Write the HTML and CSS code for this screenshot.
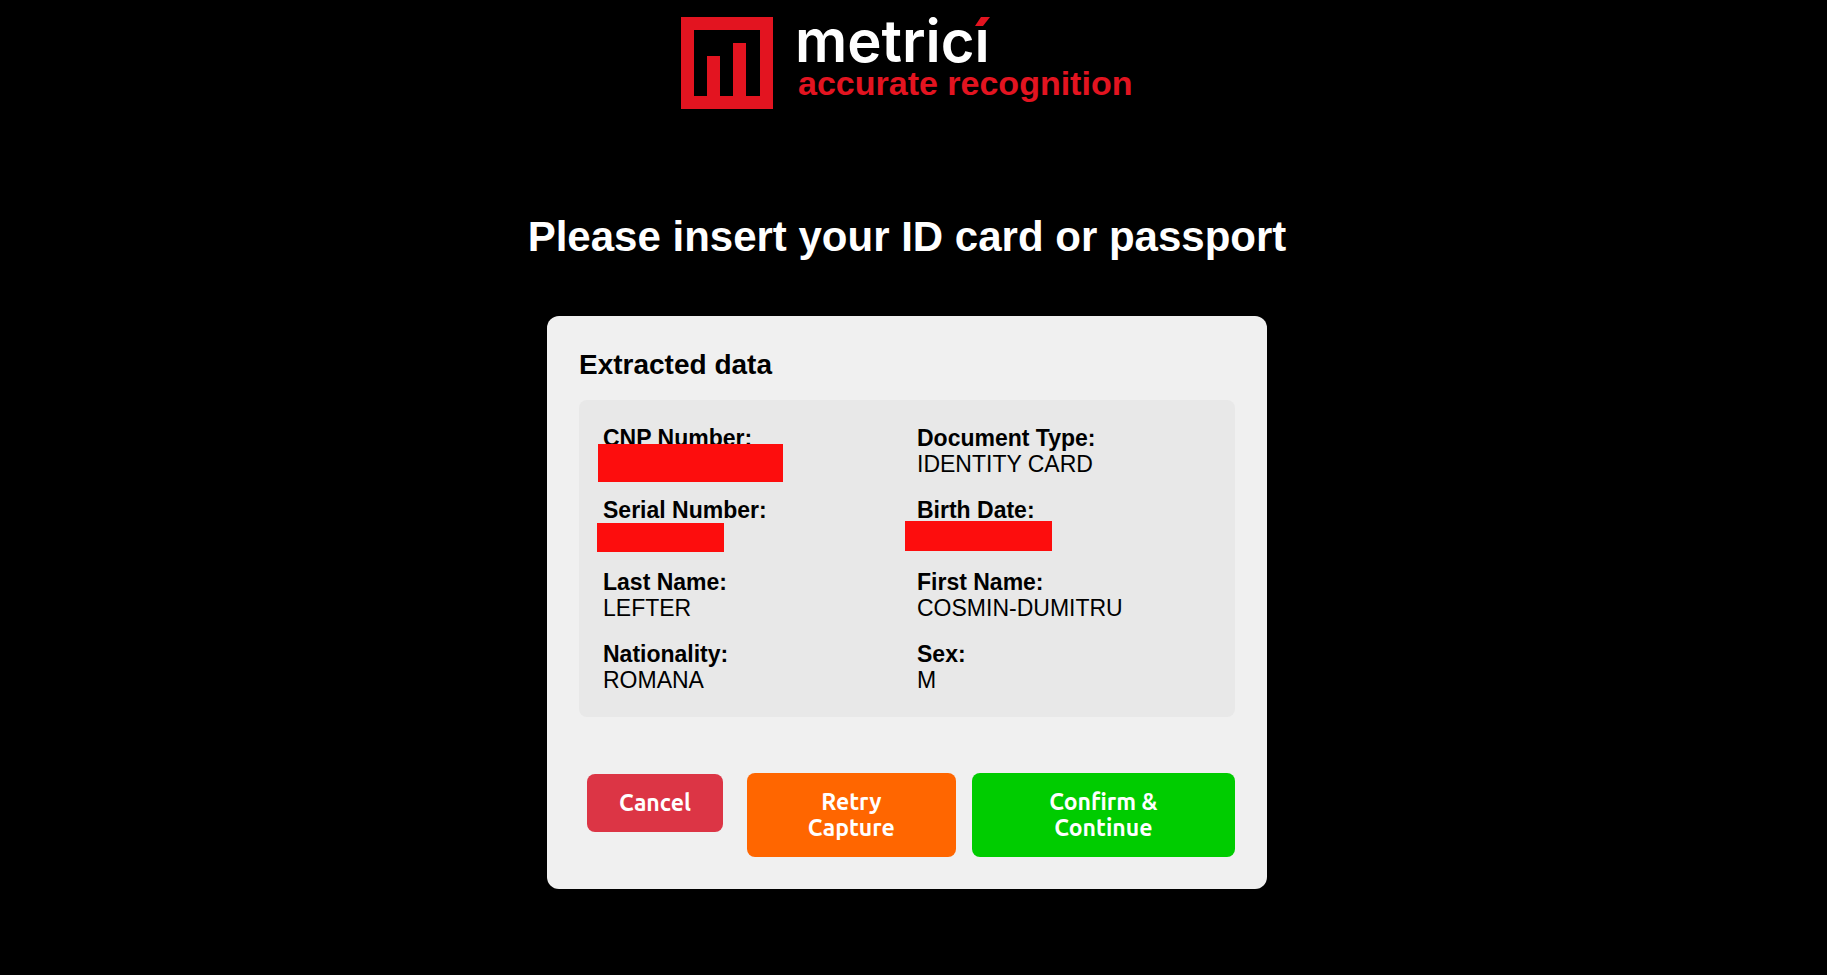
FILE: index.html
```
<!DOCTYPE html>
<html lang="en">
<head>
<meta charset="UTF-8">
<meta name="viewport" content="width=device-width, initial-scale=1.0">
<title>Metrici - Accurate recognition</title>
<link rel="stylesheet" href="styles.css">
</head>
<body>
<header>
  <svg class="logo" width="453" height="92" viewBox="0 0 453 92" role="img" aria-label="metrici accurate recognition">
    <path class="logo-red" fill-rule="evenodd" d="M0 0H92V92H0ZM13 13V79H26V39H39V79H52V26H65V79H79V13Z"/>
    <text class="logo-name" x="114" y="45">metricı</text>
    <path class="logo-red" d="M294 9L300 0H309L302 9Z"/>
    <text class="logo-tagline" x="117" y="78">accurate recognition</text>
  </svg>
</header>

<main>
  <h1>Please insert your ID card or passport</h1>

  <section class="card">
    <h2>Extracted data</h2>
    <dl class="data-grid">
      <div class="field">
        <dt>CNP Number:</dt>
        <dd class="redacted redacted-cnp"></dd>
      </div>
      <div class="field">
        <dt>Document Type:</dt>
        <dd>IDENTITY CARD</dd>
      </div>
      <div class="field">
        <dt>Serial Number:</dt>
        <dd class="redacted redacted-serial"></dd>
      </div>
      <div class="field">
        <dt>Birth Date:</dt>
        <dd class="redacted redacted-birth"></dd>
      </div>
      <div class="field">
        <dt>Last Name:</dt>
        <dd>LEFTER</dd>
      </div>
      <div class="field">
        <dt>First Name:</dt>
        <dd>COSMIN-DUMITRU</dd>
      </div>
      <div class="field">
        <dt>Nationality:</dt>
        <dd>ROMANA</dd>
      </div>
      <div class="field">
        <dt>Sex:</dt>
        <dd>M</dd>
      </div>
    </dl>

    <div class="actions">
      <button type="button" class="btn btn-cancel">Cancel</button>
      <button type="button" class="btn btn-retry">Retry Capture</button>
      <button type="button" class="btn btn-confirm">Confirm &amp; Continue</button>
    </div>
  </section>
</main>
</body>
</html>
```
FILE: styles.css
```
* {
  box-sizing: border-box;
}

body {
  margin: 0;
  padding: 17px 13px 0 0;
  min-height: 100vh;
  background-color: #000;
  color: #000;
  font-family: "Liberation Sans", Arial, sans-serif;
}

header {
  display: flex;
  justify-content: center;
  margin-bottom: 104px;
}

.logo {
  display: block;
  max-width: 100%;
  overflow: visible;
}

.logo-red {
  fill: #e31420;
}

.logo-name {
  fill: #fff;
  font-family: Inter, "Liberation Sans", sans-serif;
  font-size: 58px;
  font-weight: 600;
}

.logo-tagline {
  fill: #e31420;
  font-size: 34px;
  font-weight: bold;
}

main {
  display: flex;
  flex-direction: column;
  align-items: center;
}

h1 {
  margin: 0 0 55px;
  font-size: 42px;
  line-height: 48px;
  color: #fff;
  text-align: center;
}

.card {
  width: 100%;
  max-width: 720px;
  padding: 32px;
  border-radius: 12px;
  background-color: #f0f0f0;
}

h2 {
  margin: 0 0 18px;
  font-size: 28px;
  line-height: 34px;
}

.data-grid {
  display: grid;
  grid-template-columns: 1fr 1fr;
  gap: 20px;
  margin: 0 0 56px;
  padding: 25px 24px 24px;
  border-radius: 8px;
  background-color: #e8e8e8;
  font-size: 23px;
  line-height: 26px;
}

.field {
  position: relative;
  min-height: 52px;
}

dt {
  font-weight: bold;
}

dd {
  margin: 0;
}

/* hidden personal data */
.redacted {
  position: absolute;
  background-color: #fd0d0d;
}

.redacted-cnp {
  top: 19px;
  left: -5px;
  width: 185px;
  height: 38px;
}

.redacted-serial {
  top: 26px;
  left: -6px;
  width: 127px;
  height: 29px;
}

.redacted-birth {
  top: 24px;
  left: -12px;
  width: 147px;
  height: 30px;
}

.actions {
  display: flex;
  align-items: flex-start;
  gap: 16px;
}

.btn {
  padding: 16px 32px;
  border: none;
  border-radius: 8px;
  color: #fff;
  font-family: Ubuntu, "Noto Sans", sans-serif;
  font-size: 23px;
  font-weight: 600;
  line-height: 26px;
  cursor: pointer;
}

.btn-cancel {
  margin: 1px 8px 0;
  background-color: #dc3545;
}

.btn-retry {
  flex: 8 1 0;
  background-color: #ff6600;
}

.btn-confirm {
  flex: 11 1 0;
  background-color: #00cc00;
}
```
